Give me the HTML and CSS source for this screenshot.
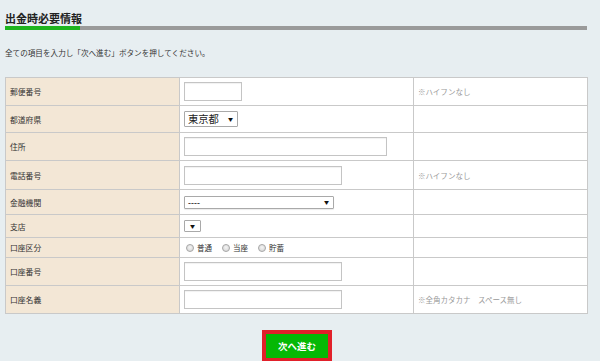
FILE: index.html
```html
<!DOCTYPE html>
<html lang="ja">
<head>
<meta charset="utf-8">
<title>出金時必要情報</title>
<link rel="stylesheet" href="styles.css">
</head>
<body>
<div class="page">
  <h1 class="title">出金時必要情報</h1>
  <div class="bar"><span class="bar-green"></span><span class="bar-gray"></span></div>
  <p class="lead">全ての項目を入力し「次へ進む」ボタンを押してください。</p>
  <table class="form">
    <colgroup><col class="c1"><col class="c2"><col class="c3"></colgroup>
    <tr class="r28">
      <th>郵便番号</th>
      <td><input class="inp w58" type="text"></td>
      <td class="note">※ハイフンなし</td>
    </tr>
    <tr class="r27">
      <th>都道府県</th>
      <td><div class="sel sel-pref"><span class="sel-text">東京都</span><span class="arrow">▼</span></div></td>
      <td></td>
    </tr>
    <tr class="r28">
      <th>住所</th>
      <td><input class="inp w203" type="text"></td>
      <td></td>
    </tr>
    <tr class="r29">
      <th>電話番号</th>
      <td><input class="inp w158" type="text"></td>
      <td class="note">※ハイフンなし</td>
    </tr>
    <tr class="r25">
      <th>金融機関</th>
      <td><div class="sel sel-bank"><span class="sel-text small">----</span><span class="arrow">▼</span></div></td>
      <td></td>
    </tr>
    <tr class="r23">
      <th>支店</th>
      <td><div class="sel sel-branch"><span class="arrow">▼</span></div></td>
      <td></td>
    </tr>
    <tr class="r20">
      <th>口座区分</th>
      <td>
        <div class="radios">
          <label class="radio"><span class="dot"></span>普通</label>
          <label class="radio"><span class="dot"></span>当座</label>
          <label class="radio"><span class="dot"></span>貯蓄</label>
        </div>
      </td>
      <td></td>
    </tr>
    <tr class="r28">
      <th>口座番号</th>
      <td><input class="inp w158" type="text"></td>
      <td></td>
    </tr>
    <tr class="r28">
      <th>口座名義</th>
      <td><input class="inp w158" type="text"></td>
      <td class="note">※全角カタカナ　スペース無し</td>
    </tr>
  </table>
  <div class="actions">
    <button class="next" type="button">次へ進む</button>
  </div>
</div>
</body>
</html>
```

FILE: styles.css
```css
html, body {
  margin: 0;
  padding: 0;
  background: #e7eef1;
}
body {
  font-family: "Noto Sans CJK JP", "Noto Sans", sans-serif;
  color: #333;
}
.page {
  width: 582px;
  padding-left: 5px;
}
.title {
  margin: 0;
  padding-top: 11px;
  font-size: 11px;
  line-height: 15px;
  font-weight: bold;
  color: #222;
}
.bar {
  display: flex;
  height: 4px;
}
.bar-green {
  width: 75px;
  background: #1eb41e;
}
.bar-gray {
  flex: 1;
  background: #9a9a9a;
}
.lead {
  margin: 18px 0 0;
  font-size: 7.6px;
  line-height: 10px;
  color: #333;
}
.form {
  margin-top: 19px;
  width: 582px;
  border-collapse: collapse;
  table-layout: fixed;
  background: #fff;
  border: 1px solid #c9c9c9;
}
.c1 { width: 174px; }
.c2 { width: 234px; }
.c3 { width: 174px; }
.form th, .form td {
  border: 1px solid #c9c9c9;
  padding: 0 4px;
  vertical-align: middle;
  text-align: left;
}
.form th {
  background: #f3e7d6;
  font-weight: normal;
  font-size: 7.8px;
  color: #333;
}
.form td {
  font-size: 7.5px;
}
.note {
  color: #999;
}
.r20 { height: 20px; }
.r23 { height: 23px; }
.r25 { height: 25px; }
.r27 { height: 27px; }
.r28 { height: 28px; }
.r29 { height: 29px; }
.inp {
  display: block;
  box-sizing: border-box;
  height: 19px;
  margin: 0;
  padding: 0 3px;
  border: 1px solid #c4c4c4;
  background: #fff;
  box-shadow: inset 0 1px 1px rgba(0,0,0,0.06);
}
.w58 { width: 58px; }
.w203 { width: 203px; }
.w158 { width: 158px; }
.sel {
  display: flex;
  align-items: center;
  justify-content: space-between;
  box-sizing: border-box;
  border: 1px solid #a9a9a9;
  background: #fff;
  padding: 0 4px 0 3px;
  border-radius: 1px;
}
.sel-pref {
  width: 54px;
  height: 16px;
}
.sel-bank {
  width: 150px;
  height: 13px;
  box-shadow: 0 1px 1px rgba(0,0,0,0.08);
}
.sel-branch {
  width: 17px;
  height: 12px;
  justify-content: center;
  padding: 0;
}
.sel-text {
  font-size: 10.3px;
  line-height: 12px;
  color: #222;
}
.sel-text.small {
  font-size: 8px;
  line-height: 9px;
  font-weight: bold;
  color: #333;
}
.arrow {
  font-size: 5px;
  line-height: 6px;
  color: #111;
}
.radios {
  display: flex;
  gap: 10px;
  padding-left: 2px;
}
.radio {
  display: flex;
  align-items: center;
  gap: 3px;
  font-size: 7.5px;
  color: #333;
}
.dot {
  width: 6px;
  height: 6px;
  border-radius: 50%;
  border: 1px solid #a8a8a8;
  background: radial-gradient(circle at 50% 40%, #f4f4f4, #d2d2d2);
}
.actions {
  display: flex;
  justify-content: center;
  margin-top: 16px;
}
.next {
  width: 70px;
  height: 32px;
  box-sizing: border-box;
  border: 4px solid #e1202a;
  background: #05b805;
  color: #fff;
  font-family: "Noto Sans CJK JP", "Noto Sans", sans-serif;
  font-size: 9.5px;
  font-weight: bold;
  padding: 0;
  margin-left: 2px;
}
```
